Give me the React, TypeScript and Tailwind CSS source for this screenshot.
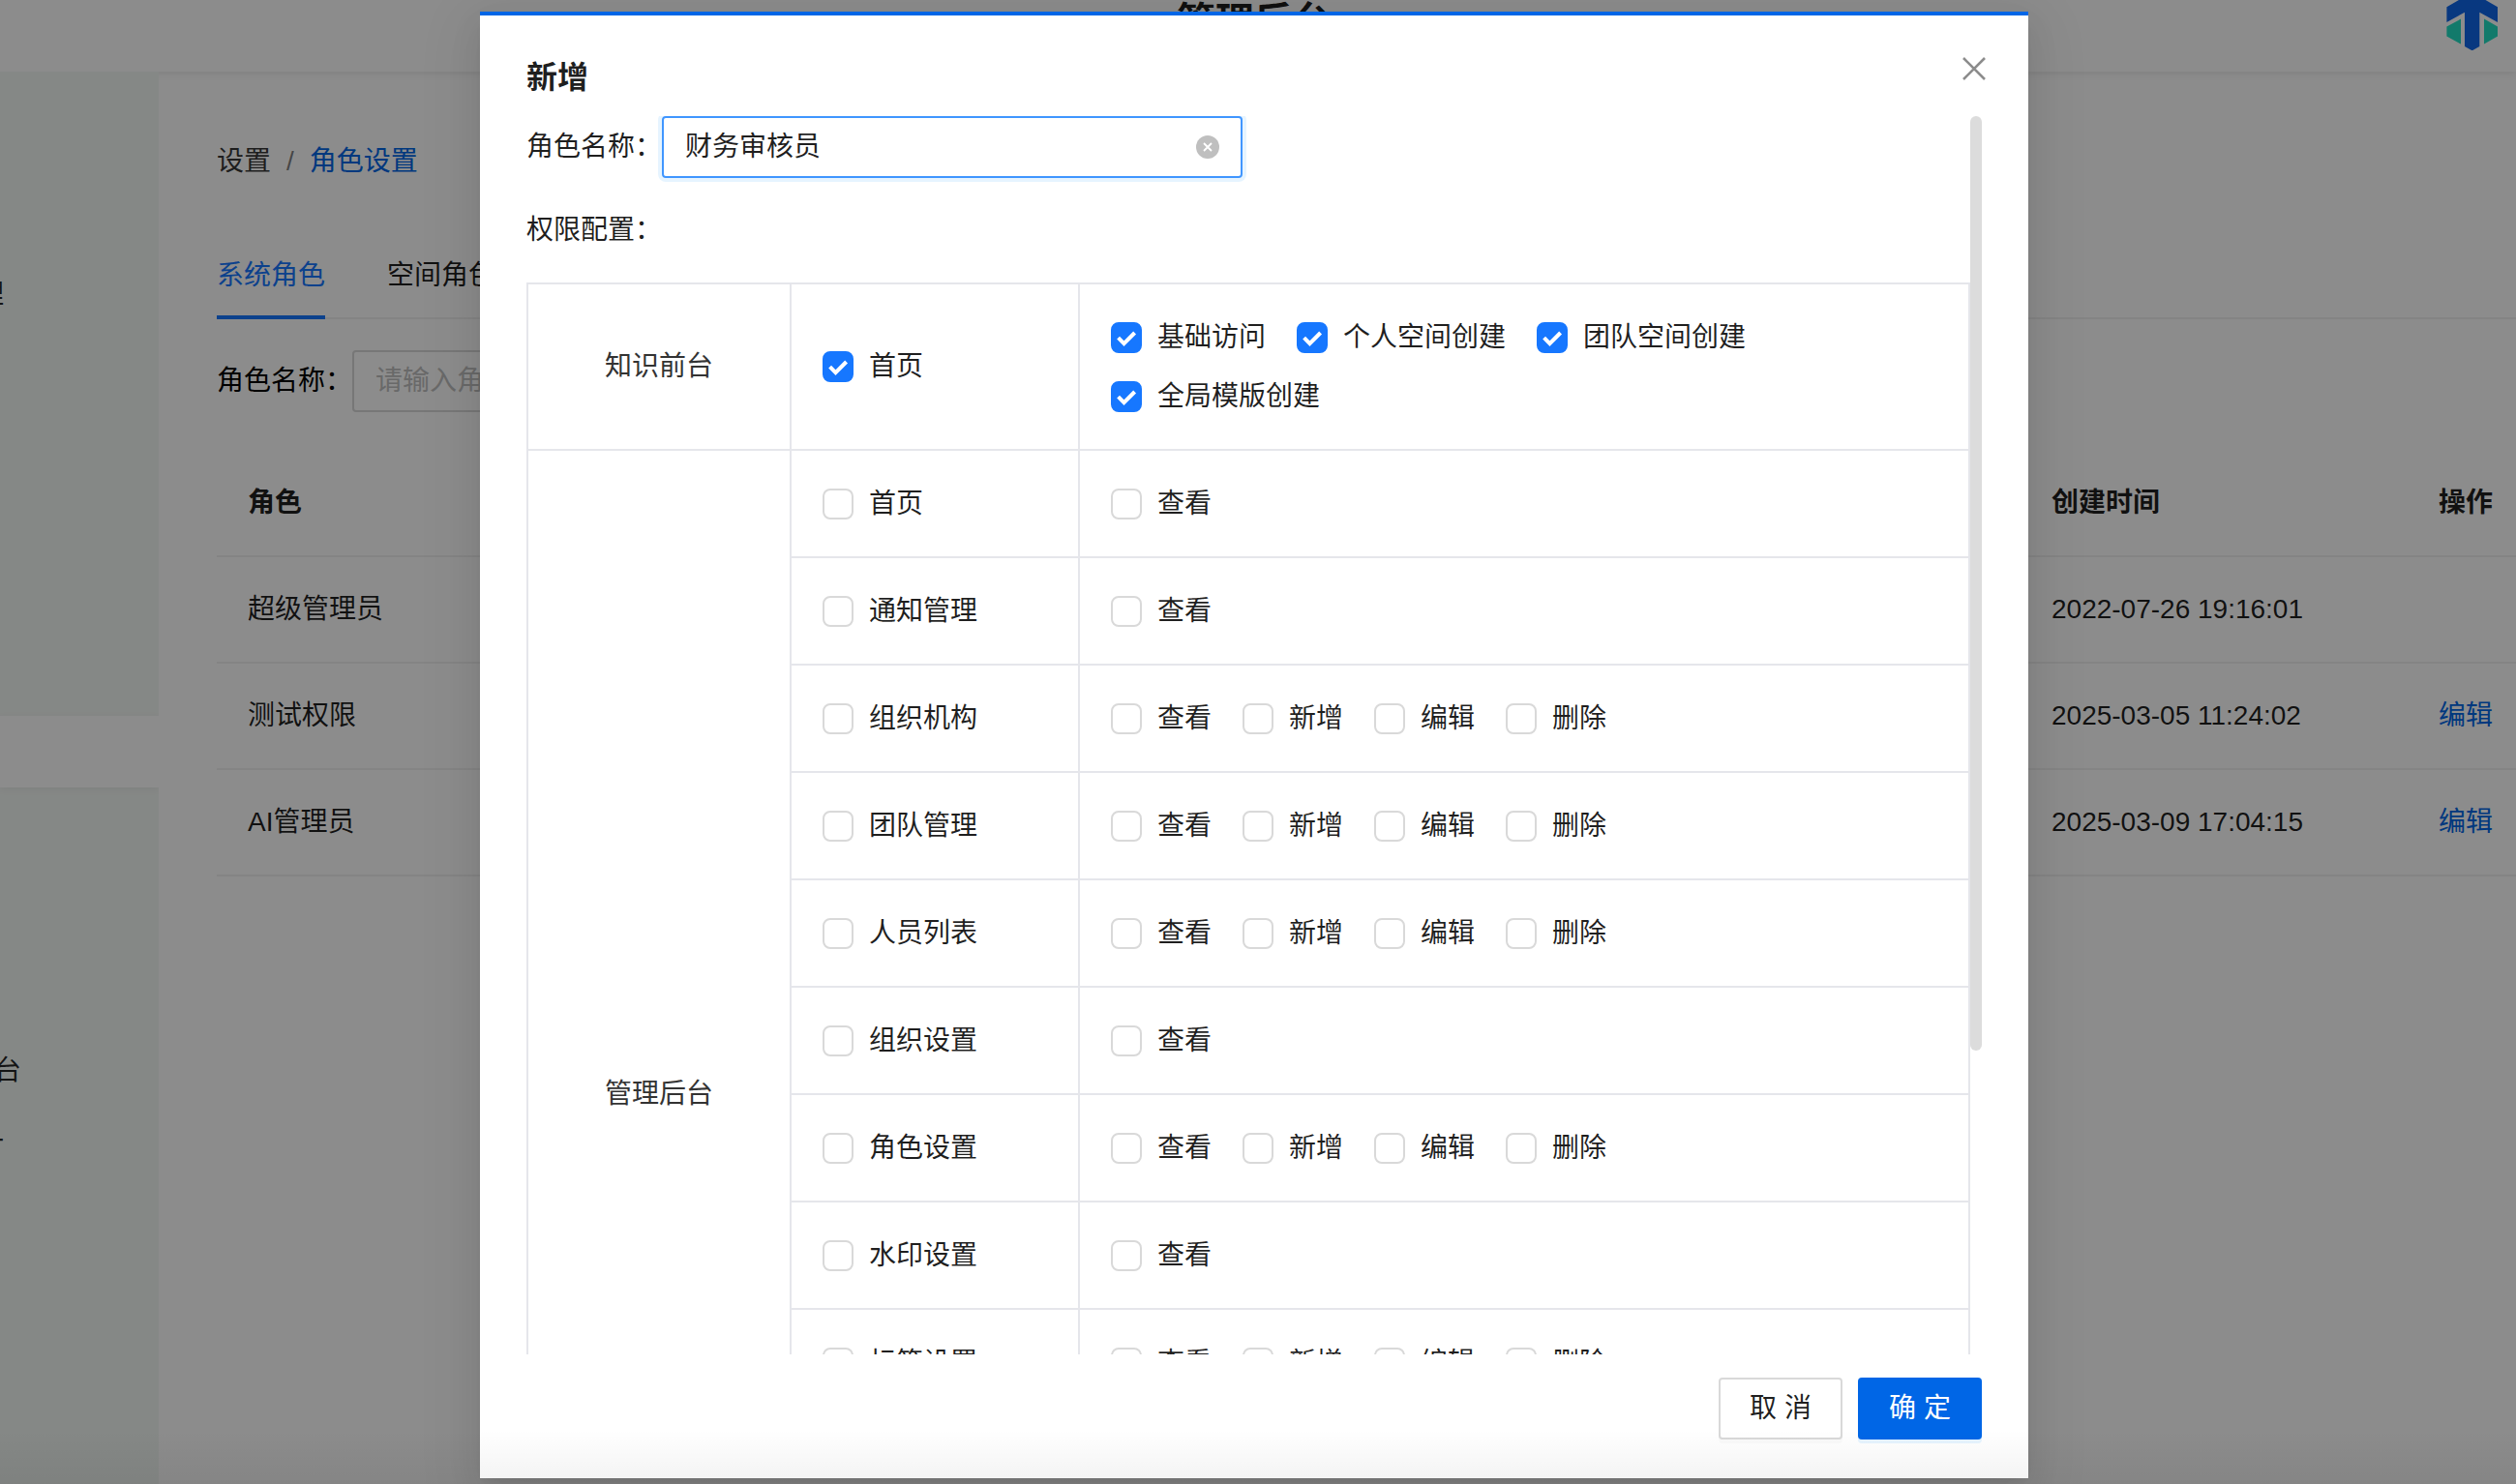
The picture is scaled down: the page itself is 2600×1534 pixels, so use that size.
import { useState } from "react";

type PermissionRow = {
  name: string;
  actions: string[];
};

type PermissionGroup = {
  title: string;
  checked: boolean;
  rows: PermissionRow[];
};

const crud = ["查看", "新增", "编辑", "删除"];

const groups: PermissionGroup[] = [
  {
    title: "知识前台",
    checked: true,
    rows: [{ name: "首页", actions: ["基础访问", "个人空间创建", "团队空间创建", "全局模版创建"] }],
  },
  {
    title: "管理后台",
    checked: false,
    rows: [
      { name: "首页", actions: ["查看"] },
      { name: "通知管理", actions: ["查看"] },
      { name: "组织机构", actions: crud },
      { name: "团队管理", actions: crud },
      { name: "人员列表", actions: crud },
      { name: "组织设置", actions: ["查看"] },
      { name: "角色设置", actions: crud },
      { name: "水印设置", actions: ["查看"] },
      { name: "标签设置", actions: crud },
      { name: "模版管理", actions: ["查看"] },
      { name: "空间管理", actions: ["查看"] },
      { name: "操作日志", actions: ["查看"] },
    ],
  },
];

const roles = [
  { name: "超级管理员", createdAt: "2022-07-26 19:16:01", editable: false },
  { name: "测试权限", createdAt: "2025-03-05 11:24:02", editable: true },
  { name: "AI管理员", createdAt: "2025-03-09 17:04:15", editable: true },
];

function Logo() {
  return (
    <svg width="54" height="60" viewBox="28 -8 54 60" className="mr-2.5 shrink-0" aria-hidden>
      <path
        fill="#0f66ea"
        d="M28.4 7.3 54.7-8 81 7.3V23L62.3 12.7V48l-7.6 4.3L47 48V12.7L28.4 23Z"
      />
      <path fill="#21dfc3" d="M28.4 27.6 43 19.6v26L28.4 37.4ZM81 27.6l-14-8v26l14-8.2Z" />
    </svg>
  );
}

function PermissionCheckbox({ label, defaultChecked }: { label: string; defaultChecked: boolean }) {
  return (
    <label className="flex h-[45px] cursor-pointer items-center gap-4 whitespace-nowrap">
      <span className="grid shrink-0">
        <input
          type="checkbox"
          defaultChecked={defaultChecked}
          className="peer col-start-1 row-start-1 size-8 appearance-none rounded-lg border-2 border-[#d9d9d9] bg-white checked:border-[#1677ff] checked:bg-[#1677ff]"
        />
        <svg
          viewBox="0 0 32 32"
          className="pointer-events-none invisible col-start-1 row-start-1 size-8 peer-checked:visible"
          aria-hidden
        >
          <path d="M7.6 16.2 13.5 22.2 24.6 11" fill="none" stroke="white" strokeWidth="4" />
        </svg>
      </span>
      {label}
    </label>
  );
}

function Sidebar() {
  return (
    <aside className="relative flex w-[164px] shrink-0 flex-col overflow-hidden whitespace-nowrap text-black/85">
      <div className="flex h-[666px] shrink-0 justify-end bg-[#f3f7f4] pt-[209px] pr-[160px]">
        <a href="#manage">管理</a>
      </div>
      <div className="relative h-[74px] shrink-0 bg-white shadow-[0_2px_8px_rgba(0,0,0,0.05)]" />
      <div className="flex flex-1 flex-col items-end gap-8 bg-[#f3f7f4] pt-[271px] pr-[142px]">
        <a href="#front">前台</a>
        <a href="#stats" className="pr-[18px]">统计</a>
      </div>
    </aside>
  );
}

function RolePage() {
  return (
    <main className="min-w-0 flex-1 pt-[71px] pl-[60px]">
      <nav className="flex gap-4" aria-label="Breadcrumb">
        <a href="#settings" className="text-black/80">设置</a>
        <span className="text-black/50">/</span>
        <a href="#roles" className="text-[#0066e6]">角色设置</a>
      </nav>

      <div className="mt-[74px] flex gap-16 border-b-2 border-[#f0f0f0]" role="tablist">
        <button role="tab" aria-selected className="-mb-0.5 border-b-4 border-[#1677ff] pb-[19px] text-[#1677ff]">
          系统角色
        </button>
        <button role="tab" aria-selected={false} className="pb-[21px]">
          空间角色
        </button>
      </div>

      <div className="mt-8 flex items-center">
        <label htmlFor="role-search" className="text-black">
          角色名称：
        </label>
        <input
          id="role-search"
          placeholder="请输入角色名称"
          className="h-16 w-[480px] rounded border-2 border-[#d9d9d9] px-[22px] placeholder:text-[#bfbfbf]"
        />
      </div>

      <table className="mt-[39px] w-full table-fixed text-left">
        <thead>
          <tr className="h-[110px] border-b-2 border-[#f0f0f0]">
            <th className="pl-8 font-semibold">角色</th>
            <th className="w-[400px] pl-8 font-semibold">创建时间</th>
            <th className="w-[112px] pl-8 font-semibold">操作</th>
          </tr>
        </thead>
        <tbody>
          {roles.map((role) => (
            <tr key={role.name} className="h-[110px] border-b-2 border-[#f0f0f0]">
              <td className="pl-8">{role.name}</td>
              <td className="pl-8">{role.createdAt}</td>
              <td className="pl-8">
                {role.editable && <a href="#edit" className="text-[#0066e6]">编辑</a>}
              </td>
            </tr>
          ))}
        </tbody>
      </table>
    </main>
  );
}

function PermissionTable() {
  return (
    <table className="w-full table-fixed border-collapse border-2 border-[#e5e6eb]">
      <colgroup>
        <col className="w-[272px]" />
        <col className="w-[298px]" />
        <col />
      </colgroup>
      <tbody>
        {groups.map((group) =>
          group.rows.map((row, index) => (
            <tr key={row.name}>
              {index === 0 && (
                <th
                  scope="rowgroup"
                  rowSpan={group.rows.length}
                  className="border-2 border-[#e5e6eb] text-center font-normal text-[#333]"
                >
                  {group.title}
                </th>
              )}
              <td className="border-2 border-[#e5e6eb] px-8 py-8">
                <PermissionCheckbox label={row.name} defaultChecked={group.checked} />
              </td>
              <td className="border-2 border-[#e5e6eb] px-8 py-8">
                <div className="flex flex-wrap gap-x-8 gap-y-4">
                  {row.actions.map((action) => (
                    <PermissionCheckbox key={action} label={action} defaultChecked={group.checked} />
                  ))}
                </div>
              </td>
            </tr>
          )),
        )}
      </tbody>
    </table>
  );
}

function RoleDialog() {
  const [name, setName] = useState("财务审核员");

  return (
    <div
      role="dialog"
      aria-labelledby="dialog-title"
      className="flex h-full w-[1600px] max-w-full flex-col border-t-4 border-[#0066e6] bg-white px-12 pb-10 shadow-[0_12px_32px_rgba(0,0,0,0.08),0_6px_12px_-8px_rgba(0,0,0,0.12),0_18px_56px_16px_rgba(0,0,0,0.05)]"
    >
      <div className="flex h-[104px] shrink-0 items-start justify-between">
        <h2 id="dialog-title" className="pt-10 text-[32px] leading-[48px] font-semibold">
          新增
        </h2>
        <button aria-label="关闭" className="mt-[39px] -mr-2 flex size-8 items-center justify-center text-[#8c8c8c]">
          <svg width="24" height="24" viewBox="0 0 24 24" fill="none" stroke="currentColor" strokeWidth="2.6" aria-hidden>
            <path d="M1 1 23 23M23 1 1 23" />
          </svg>
        </button>
      </div>

      <div className="flex min-h-0 flex-1 items-start">
        <div className="h-full min-w-0 flex-1 overflow-hidden">
          <div className="flex items-center">
            <label htmlFor="role-name">角色名称：</label>
            <div className="flex h-16 w-[600px] items-center rounded border-2 border-[#4096ff] px-[22px] shadow-[0_0_0_4px_rgba(5,145,255,0.1)]">
              <input
                id="role-name"
                value={name}
                onChange={(e) => setName(e.target.value)}
                className="min-w-0 flex-1 outline-none"
              />
              <button aria-label="清空" onClick={() => setName("")}>
                <svg width="24" height="24" viewBox="0 0 24 24" aria-hidden>
                  <circle cx="12" cy="12" r="12" fill="#bfbfbf" />
                  <path d="M8 8 16 16M16 8 8 16" stroke="white" strokeWidth="1.8" />
                </svg>
              </button>
            </div>
          </div>
          <p className="mt-8 mb-8">权限配置：</p>
          <PermissionTable />
        </div>
        <div className="h-[966px] max-h-full w-3 shrink-0 rounded-full bg-[#dcdcdc]" />
      </div>

      <div className="flex shrink-0 justify-end gap-4 pt-6">
        <button className="h-16 w-32 rounded border-2 border-[#d9d9d9] bg-white shadow-[0_4px_0_rgba(0,0,0,0.02)]">
          取 消
        </button>
        <button className="h-16 w-32 rounded bg-[#0066e6] text-white shadow-[0_4px_0_rgba(5,145,255,0.1)]">
          确 定
        </button>
      </div>
    </div>
  );
}

export default function App() {
  return (
    <div className="relative flex h-screen flex-col overflow-hidden bg-white font-['Liberation_Sans','Noto_Sans_CJK_SC',sans-serif] text-[28px] leading-[44px] text-black/88">
      <header className="flex h-[74px] shrink-0 items-end pr-2 pb-[22px] shadow-[0_2px_8px_rgba(0,0,0,0.09)]">
        <div className="flex-1" />
        <h1 className="text-[40px] leading-[60px] font-bold">管理后台</h1>
        <div className="flex flex-1 justify-end">
          <Logo />
        </div>
      </header>
      <div className="flex min-h-0 flex-1">
        <Sidebar />
        <RolePage />
      </div>

      <div className="absolute inset-0 flex justify-center bg-black/45 pt-3 pr-2 pb-1.5">
        <RoleDialog />
      </div>
      <div className="pointer-events-none absolute inset-x-0 bottom-0 h-14 bg-linear-to-b from-transparent to-black/5" />
    </div>
  );
}
